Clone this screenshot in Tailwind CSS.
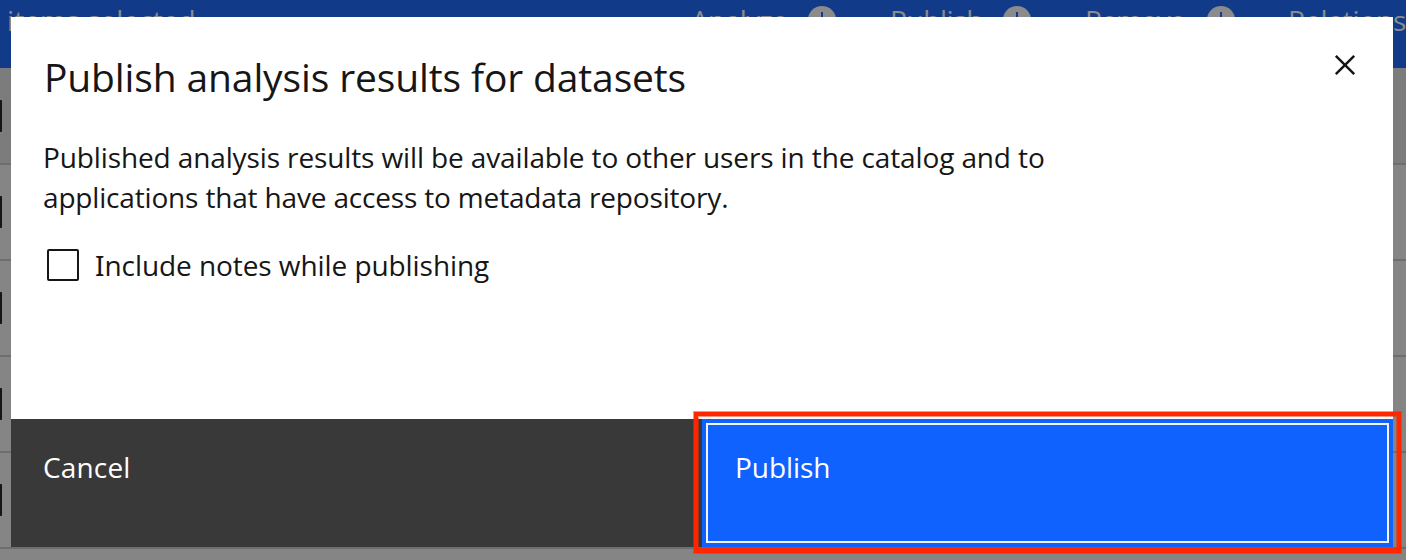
<!DOCTYPE html>
<html lang="en">
<head>
<meta charset="utf-8">
<title>Publish analysis results for datasets</title>
<script src="https://cdn.jsdelivr.net/npm/@tailwindcss/browser@4"></script>
</head>
<body class="relative h-[560px] w-[1406px] overflow-hidden bg-[#858585] font-['Open_Sans','Noto_Sans',sans-serif] text-[28px] text-[#161616]">

  <!-- Dimmed page behind the dialog -->
  <div class="flex h-full flex-col" aria-hidden="true">
    <div class="flex h-[68px] shrink-0 whitespace-nowrap bg-[#113b88] leading-[40px] text-[#8b8b8b]">
      <span class="ml-[7px] w-[684px] shrink-0 tracking-[0.1px]">items selected</span>
      <div class="flex w-[199px] shrink-0">
        <span class="w-[117px] shrink-0 tracking-[-0.6px]">Analyze</span>
        <svg class="mt-[6px] size-7 shrink-0" viewBox="0 0 28 28"><circle cx="14" cy="14" r="14" fill="#8b8b8b"/><path d="M14 6v16M8 16l6 6 6-6" fill="none" stroke="#113b88" stroke-width="2"/></svg>
      </div>
      <div class="flex w-[195px] shrink-0">
        <span class="w-[113px] shrink-0 tracking-[-0.4px]">Publish</span>
        <svg class="mt-[6px] size-7 shrink-0" viewBox="0 0 28 28"><circle cx="14" cy="14" r="14" fill="#8b8b8b"/><path d="M14 6v16M8 16l6 6 6-6" fill="none" stroke="#113b88" stroke-width="2"/></svg>
      </div>
      <div class="flex w-[203px] shrink-0">
        <span class="w-[122px] shrink-0 tracking-[-1px]">Remove</span>
        <svg class="mt-[6px] size-7 shrink-0" viewBox="0 0 28 28"><circle cx="14" cy="14" r="14" fill="#8b8b8b"/><path d="M14 6v16M8 16l6 6 6-6" fill="none" stroke="#113b88" stroke-width="2"/></svg>
      </div>
      <span class="shrink-0 tracking-[-0.2px]">Relationships</span>
    </div>
    <div class="flex h-[97px] shrink-0 items-start border-b-2 border-[#6e6e6e] bg-[#7c7c7c] pt-8"><span class="h-8 w-0.5 rounded-r-[1px] bg-[#161616]"></span></div>
    <div class="flex h-24 shrink-0 items-start border-b-2 border-[#6e6e6e] pt-[31px]"><span class="h-8 w-0.5 rounded-r-[1px] bg-[#161616]"></span></div>
    <div class="flex h-24 shrink-0 items-start border-b-2 border-[#6e6e6e] pt-[31px]"><span class="h-8 w-0.5 rounded-r-[1px] bg-[#161616]"></span></div>
    <div class="flex h-24 shrink-0 items-start border-b-2 border-[#6e6e6e] pt-[31px]"><span class="h-8 w-0.5 rounded-r-[1px] bg-[#161616]"></span></div>
    <div class="flex h-24 shrink-0 items-start border-b-2 border-[#6e6e6e] pt-[31px]"><span class="h-8 w-0.5 rounded-r-[1px] bg-[#161616]"></span></div>
  </div>

  <!-- Dialog -->
  <div role="dialog" class="absolute left-[11px] top-[17px] flex h-[530px] w-[1382px] flex-col bg-white">
    <div class="flex-1 pl-8 pr-8">
      <div class="flex justify-between">
        <h1 class="mt-[32px] whitespace-nowrap pl-px text-[39px] leading-[56px] tracking-[-0.13px]">Publish analysis results for datasets</h1>
        <button aria-label="Close" class="mt-8 size-8">
          <svg class="size-8" viewBox="0 0 32 32"><path d="M24 9.4 22.6 8 16 14.6 9.4 8 8 9.4l6.6 6.6L8 22.6 9.4 24l6.6-6.6 6.6 6.6 1.4-1.4-6.6-6.6z" fill="#161616" transform="translate(16 16) scale(1.26) translate(-16 -16)"/></svg>
        </button>
      </div>
      <p class="mt-[32px] whitespace-nowrap leading-[40px] tracking-[-0.12px]">Published analysis results will be available to other users in the catalog and to<br><span class="tracking-[-0.17px]">applications that have access to metadata repository.</span></p>
      <label class="mt-[28px] flex items-start pl-1">
        <span class="mt-[4px] size-8 rounded-[2px] border-2 border-[#161616]"></span>
        <span class="ml-[16px] whitespace-nowrap leading-[40px] tracking-[-0.07px]"><span class="font-['Noto_Sans']">I</span>nclude notes while publishing</span>
      </label>
    </div>
    <div class="flex h-32 shrink-0 leading-[40px] text-white">
      <button class="flex w-[691px] items-start bg-[#393939] pl-8 pt-[28px] tracking-[0.15px]">Cancel</button>
      <button class="flex w-[691px] items-start bg-[#0f62fe] p-1"><span class="flex h-full w-full border-2 border-[#f4f4f4] pl-[27px] pt-[22px] tracking-[-0.05px]">Publish</span></button>
    </div>
  </div>

  <!-- Highlight frame round the Publish button -->
  <div class="pointer-events-none absolute left-[693px] top-[411px] h-[143px] w-[709px] border border-[#ff2600]/50">
    <div class="h-full w-full border-x-4 border-t-4 border-b-5 border-[#ff2600]">
      <div class="h-full w-full border border-[#ff2600]/50"></div>
    </div>
  </div>
</body>
</html>
